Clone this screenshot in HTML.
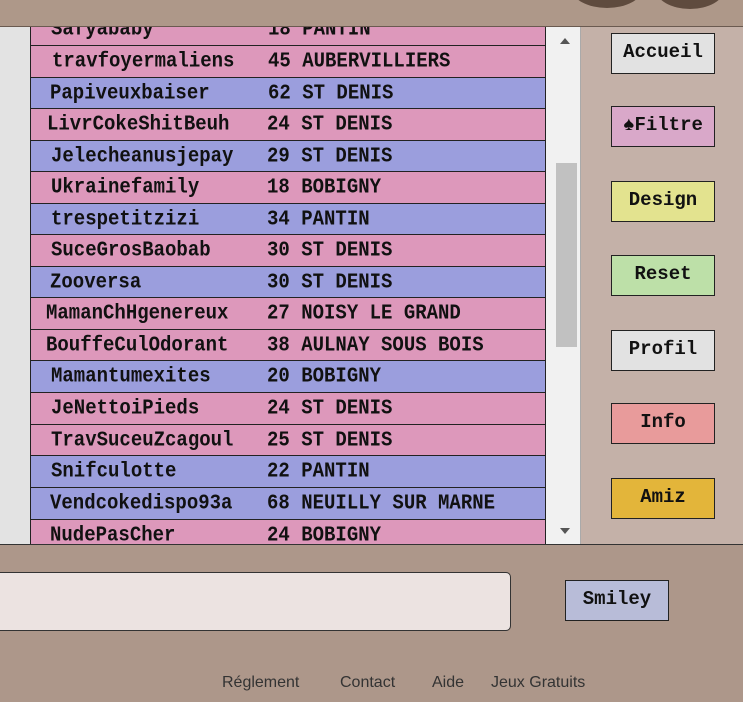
<!DOCTYPE html>
<html><head><style>
body{margin:0;width:743px;height:702px;overflow:hidden;background:#ad978a;position:relative;font-family:"Liberation Mono",monospace}
.top{position:absolute;left:0;top:0;width:743px;height:26px;background:#ae9889;border-bottom:1px solid #6a5a50;overflow:hidden}
.blob{position:absolute;background:#5f4b3e;border-radius:50%}
.left{position:absolute;left:0;top:27px;width:30px;height:517px;background:#e3e3e3}
.list{position:absolute;left:30px;top:27px;width:516px;height:517px;overflow:hidden;background:#dd98bb}
.row{position:absolute;left:0;box-sizing:border-box;width:516px;height:33px;border:1px solid #222;font-weight:bold;font-size:19px;line-height:30px;color:#111;white-space:pre}
.p{background:#dd98bb}.b{background:#9b9edd}
.row span{position:absolute;transform:scaleY(1.1)}
.sb{position:absolute;left:546px;top:27px;width:34px;height:517px;background:#f1f1f1}
.thumb{position:absolute;left:10px;top:136px;width:21px;height:184px;background:#c1c1c1}
.right{position:absolute;left:580px;top:27px;width:163px;height:517px;background:#c4b1a8;border-left:1px solid #aaa}
.btn{position:absolute;left:611px;width:102px;height:39px;border:1px solid #222;font-weight:bold;font-size:19px;line-height:36px;text-align:center;color:#111}
.bottom{position:absolute;left:0;top:544px;width:743px;height:1px;background:#333}
.inp{position:absolute;left:-10px;top:572px;width:519px;height:57px;background:#ece3e1;border:1px solid #333;border-radius:5px}
.foot{position:absolute;top:674px;font-family:"Liberation Sans",sans-serif;font-size:16px;color:#333}
</style></head><body>
<div class="top"><div class="blob" style="left:572px;top:-30px;width:70px;height:38px"></div><div class="blob" style="left:656px;top:-30px;width:68px;height:39px"></div></div>
<div class="left"></div>
<div class="list">
<div class="row p" style="top:-14px"><span style="left:20px">Safyababy</span><span style="left:237px">18 PANTIN</span></div>
<div class="row p" style="top:18px"><span style="left:21px">travfoyermaliens</span><span style="left:237px">45 AUBERVILLIERS</span></div>
<div class="row b" style="top:50px"><span style="left:19px">Papiveuxbaiser</span><span style="left:237px">62 ST DENIS</span></div>
<div class="row p" style="top:81px"><span style="left:16px">LivrCokeShitBeuh</span><span style="left:236px">24 ST DENIS</span></div>
<div class="row b" style="top:113px"><span style="left:20px">Jelecheanusjepay</span><span style="left:236px">29 ST DENIS</span></div>
<div class="row p" style="top:144px"><span style="left:20px">Ukrainefamily</span><span style="left:236px">18 BOBIGNY</span></div>
<div class="row b" style="top:176px"><span style="left:20px">trespetitzizi</span><span style="left:236px">34 PANTIN</span></div>
<div class="row p" style="top:207px"><span style="left:20px">SuceGrosBaobab</span><span style="left:236px">30 ST DENIS</span></div>
<div class="row b" style="top:239px"><span style="left:19px">Zooversa</span><span style="left:236px">30 ST DENIS</span></div>
<div class="row p" style="top:270px"><span style="left:15px">MamanChHgenereux</span><span style="left:236px">27 NOISY LE GRAND</span></div>
<div class="row p" style="top:302px"><span style="left:15px">BouffeCulOdorant</span><span style="left:236px">38 AULNAY SOUS BOIS</span></div>
<div class="row b" style="top:333px"><span style="left:20px">Mamantumexites</span><span style="left:236px">20 BOBIGNY</span></div>
<div class="row p" style="top:365px"><span style="left:20px">JeNettoiPieds</span><span style="left:236px">24 ST DENIS</span></div>
<div class="row p" style="top:397px"><span style="left:20px">TravSuceuZcagoul</span><span style="left:236px">25 ST DENIS</span></div>
<div class="row b" style="top:428px"><span style="left:20px">Snifculotte</span><span style="left:236px">22 PANTIN</span></div>
<div class="row b" style="top:460px"><span style="left:19px">Vendcokedispo93a</span><span style="left:236px">68 NEUILLY SUR MARNE</span></div>
<div class="row p" style="top:492px"><span style="left:19px">NudePasCher</span><span style="left:236px">24 BOBIGNY</span></div>
</div>
<div class="sb"><div style="position:absolute;left:14px;top:11px;width:0;height:0;border-left:5px solid transparent;border-right:5px solid transparent;border-bottom:6px solid #555"></div><div class="thumb"></div><div style="position:absolute;left:14px;top:501px;width:0;height:0;border-left:5px solid transparent;border-right:5px solid transparent;border-top:6px solid #555"></div></div>
<div class="right"></div>
<div class="btn" style="top:33px;background:#e2e2e2">Accueil</div>
<div class="btn" style="top:106px;background:#d9a8c9">♠Filtre</div>
<div class="btn" style="top:181px;background:#e3e38f">Design</div>
<div class="btn" style="top:255px;background:#bde0a8">Reset</div>
<div class="btn" style="top:330px;background:#e2e2e2">Profil</div>
<div class="btn" style="top:403px;background:#e89b9b">Info</div>
<div class="btn" style="top:478px;background:#e3b53a">Amiz</div>
<div class="bottom"></div>
<div class="inp"></div>
<div class="btn" style="left:565px;top:580px;background:#b8bcd8">Smiley</div>
<div class="foot" style="left:222px">Réglement</div>
<div class="foot" style="left:340px">Contact</div>
<div class="foot" style="left:432px">Aide</div>
<div class="foot" style="left:491px">Jeux Gratuits</div>
</body></html>
